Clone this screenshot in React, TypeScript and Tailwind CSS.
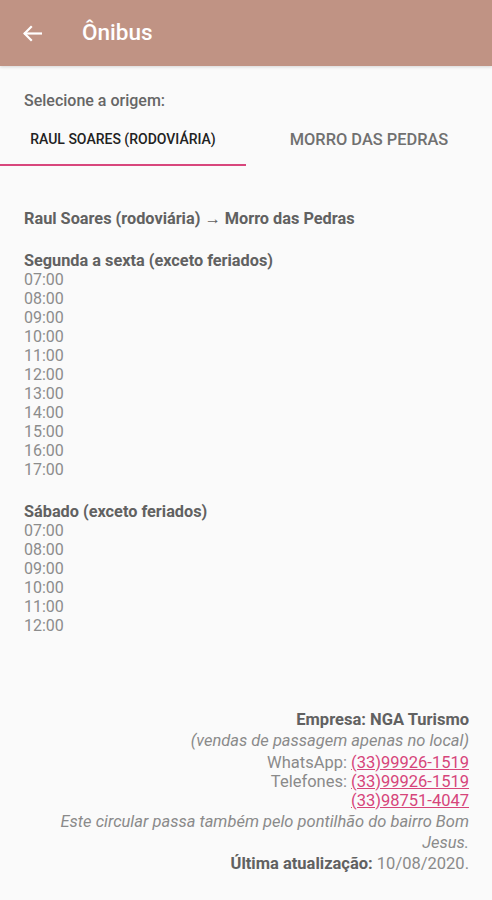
import React from "react";

const weekdays = ["07:00","08:00","09:00","10:00","11:00","12:00","13:00","14:00","15:00","16:00","17:00"];
const saturday = ["07:00","08:00","09:00","10:00","11:00","12:00"];

export default function App() {
  return (
    <div className="min-h-[900px] w-[492px] bg-[#fafafa] text-[#616161]" style={{ fontFamily: "Roboto, 'Noto Sans', sans-serif" }}>
      <div className="flex h-[66px] items-center bg-[#c09384] shadow-[0_1px_3px_rgba(0,0,0,0.15)]">
        <svg className="ml-[22px]" width="20" height="17" viewBox="0 0 20 17" fill="none" stroke="#fff" strokeWidth="2.2" strokeLinecap="square">
          <path d="M19 8.5H3" />
          <path d="M9 2L2.6 8.5 9 15" />
        </svg>
        <div className="ml-[40px] text-[22.5px] font-medium text-white">Ônibus</div>
      </div>

      <div className="pl-[24px] pt-[25px] text-[16px] leading-[20px] font-medium text-[#666]">Selecione a origem:</div>

      <div className="mt-[1px] flex">
        <div className="flex h-[54px] w-[246px] items-center justify-center border-b-2 border-[#d8467c] pt-[2px] text-[14px] font-medium text-[#222]">RAUL SOARES (RODOVIÁRIA)</div>
        <div className="flex h-[54px] w-[246px] items-center justify-center pt-[2px] text-[16.4px] font-medium text-[#707070]">MORRO DAS PEDRAS</div>
      </div>

      <div className="px-[24px]">
        <div className="mt-[43px] text-[16.3px] leading-[20px] font-bold text-[#616161]">Raul Soares (rodoviária) → Morro das Pedras</div>

        <div className="mt-[22px] text-[16.3px] leading-[19px] font-bold text-[#616161]">Segunda a sexta (exceto feriados)</div>
        {weekdays.map((t) => (
          <div key={"w" + t} className="text-[16px] leading-[19px] text-[#8c8c8c]">{t}</div>
        ))}

        <div className="mt-[23px] text-[16.3px] leading-[19px] font-bold text-[#616161]">Sábado (exceto feriados)</div>
        {saturday.map((t) => (
          <div key={"s" + t} className="text-[16px] leading-[19px] text-[#8c8c8c]">{t}</div>
        ))}
      </div>

      <div className="mt-[74px] pl-[24px] pr-[23px] text-right text-[16.5px]">
        <div className="leading-[21px] font-bold text-[#616161]">Empresa: NGA Turismo</div>
        <div className="leading-[21px] italic text-[#8a8a8a]">(vendas de passagem apenas no local)</div>
        <div className="mt-[2px] leading-[19px] text-[#8a8a8a]">
          WhatsApp: <span className="text-[#d6457a] underline">(33)99926-1519</span>
        </div>
        <div className="leading-[19px] text-[#8a8a8a]">
          Telefones: <span className="text-[#d6457a] underline">(33)99926-1519</span>
        </div>
        <div className="leading-[19px]">
          <span className="text-[#d6457a] underline">(33)98751-4047</span>
        </div>
        <div className="mt-[1px] leading-[21px] italic text-[#8a8a8a]">Este circular passa também pelo pontilhão do bairro Bom Jesus.</div>
        <div className="leading-[21px] text-[#8a8a8a]">
          <span className="font-bold text-[#616161]">Última atualização:</span> 10/08/2020.
        </div>
      </div>
    </div>
  );
}
